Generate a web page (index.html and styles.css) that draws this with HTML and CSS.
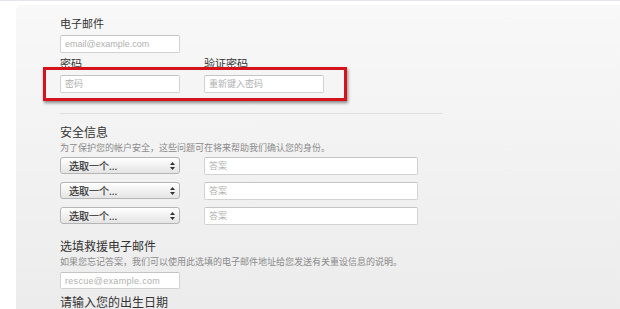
FILE: index.html
```html
<!DOCTYPE html>
<html lang="zh-CN">
<head>
    <meta charset="UTF-8">
    <title>创建 Apple ID</title>
    <link rel="stylesheet" href="styles.css">
</head>
<body>
    <div class="page">
        <div class="panel">
            <div class="field">
                <label class="label">电子邮件</label>
                <input class="text-input short" type="text" placeholder="email@example.com">
            </div>

            <div class="pair">
                <div class="field">
                    <label class="label">密码</label>
                    <input class="text-input short" type="password" placeholder="密码">
                </div>
                <div class="field">
                    <label class="label">验证密码</label>
                    <input class="text-input short" type="password" placeholder="重新键入密码">
                </div>
                <div class="highlight"></div>
            </div>

            <hr class="divider">

            <h3 class="section-title">安全信息</h3>
            <p class="hint">为了保护您的帐户安全，这些问题可在将来帮助我们确认您的身份。</p>
            <div class="questions">
                <div class="question">
                    <div class="select"><span>选取一个...</span><svg class="arrows" width="5" height="8" viewBox="0 0 5 8"><path d="M2.5 0L5 3H0z M2.5 8L5 5H0z" fill="#333"/></svg></div>
                    <input class="text-input long" type="text" placeholder="答案">
                </div>
                <div class="question">
                    <div class="select"><span>选取一个...</span><svg class="arrows" width="5" height="8" viewBox="0 0 5 8"><path d="M2.5 0L5 3H0z M2.5 8L5 5H0z" fill="#333"/></svg></div>
                    <input class="text-input long" type="text" placeholder="答案">
                </div>
                <div class="question">
                    <div class="select"><span>选取一个...</span><svg class="arrows" width="5" height="8" viewBox="0 0 5 8"><path d="M2.5 0L5 3H0z M2.5 8L5 5H0z" fill="#333"/></svg></div>
                    <input class="text-input long" type="text" placeholder="答案">
                </div>
            </div>

            <h3 class="section-title rescue-title">选填救援电子邮件</h3>
            <p class="hint">如果您忘记答案，我们可以使用此选填的电子邮件地址给您发送有关重设信息的说明。</p>
            <input class="text-input short rescue" type="text" placeholder="rescue@example.com">

            <h3 class="section-title birth-title">请输入您的出生日期</h3>
        </div>
    </div>
</body>
</html>
```

FILE: styles.css
```css
* {
    box-sizing: border-box;
}

body {
    margin: 0;
    background: #fff;
    font-family: "Liberation Sans", "Noto Sans CJK SC", sans-serif;
    color: #333;
    overflow: hidden;
}

.page {
    border-top: 1px solid #e6e4ee;
    padding: 4px 0 0 16px;
    height: 309px;
}

.panel {
    height: 100%;
    background: linear-gradient(to bottom, #f8f8f8, #ececec);
    border-radius: 6px 0 0 0;
    padding: 11px 0 0 44px;
}

.label {
    display: block;
    font-size: 11px;
    line-height: 16px;
    margin-bottom: 3px;
}

.text-input {
    display: block;
    height: 18px;
    border: 1px solid #d2d2d2;
    border-top-color: #c4c4c4;
    border-radius: 2px;
    background: #fff;
    padding: 0 4px;
    font-family: inherit;
    font-size: 9px;
    color: #333;
    outline: none;
}

.text-input::placeholder {
    color: #b0b0b0;
}

.short {
    width: 120px;
}

.long {
    width: 214px;
}

.pair {
    position: relative;
    display: flex;
    gap: 24px;
    margin-top: 3px;
}

.highlight {
    position: absolute;
    left: -17px;
    top: 11px;
    width: 304px;
    height: 34px;
    border: 3px solid #d4141a;
    box-shadow: 1px 2px 3px rgba(0, 0, 0, 0.45);
}

.divider {
    width: 382px;
    margin: 20px 0 0;
    border: 0;
    border-top: 1px solid #dedede;
}

.section-title {
    margin: 11px 0 0;
    font-size: 12px;
    line-height: 16px;
    font-weight: normal;
}

.hint {
    margin: 0;
    font-size: 9px;
    line-height: 14px;
    color: #8a8a8a;
}

.questions {
    display: flex;
    flex-direction: column;
    gap: 7px;
    margin-top: 2px;
}

.question {
    display: flex;
    gap: 24px;
}

.select {
    width: 120px;
    height: 17px;
    display: flex;
    align-items: center;
    justify-content: space-between;
    padding: 0 4px 0 8px;
    border: 1px solid #b5b5b5;
    border-radius: 3px;
    background: linear-gradient(to bottom, #ffffff, #e4e4e4);
    font-size: 10px;
    color: #333;
}

.select span {
    -webkit-text-stroke: 0.2px #333;
}

.rescue-title {
    margin-top: 14px;
}

.rescue {
    margin-top: 3px;
    height: 17px;
    letter-spacing: 0.3px;
}

.birth-title {
    margin-top: 6px;
}
```
